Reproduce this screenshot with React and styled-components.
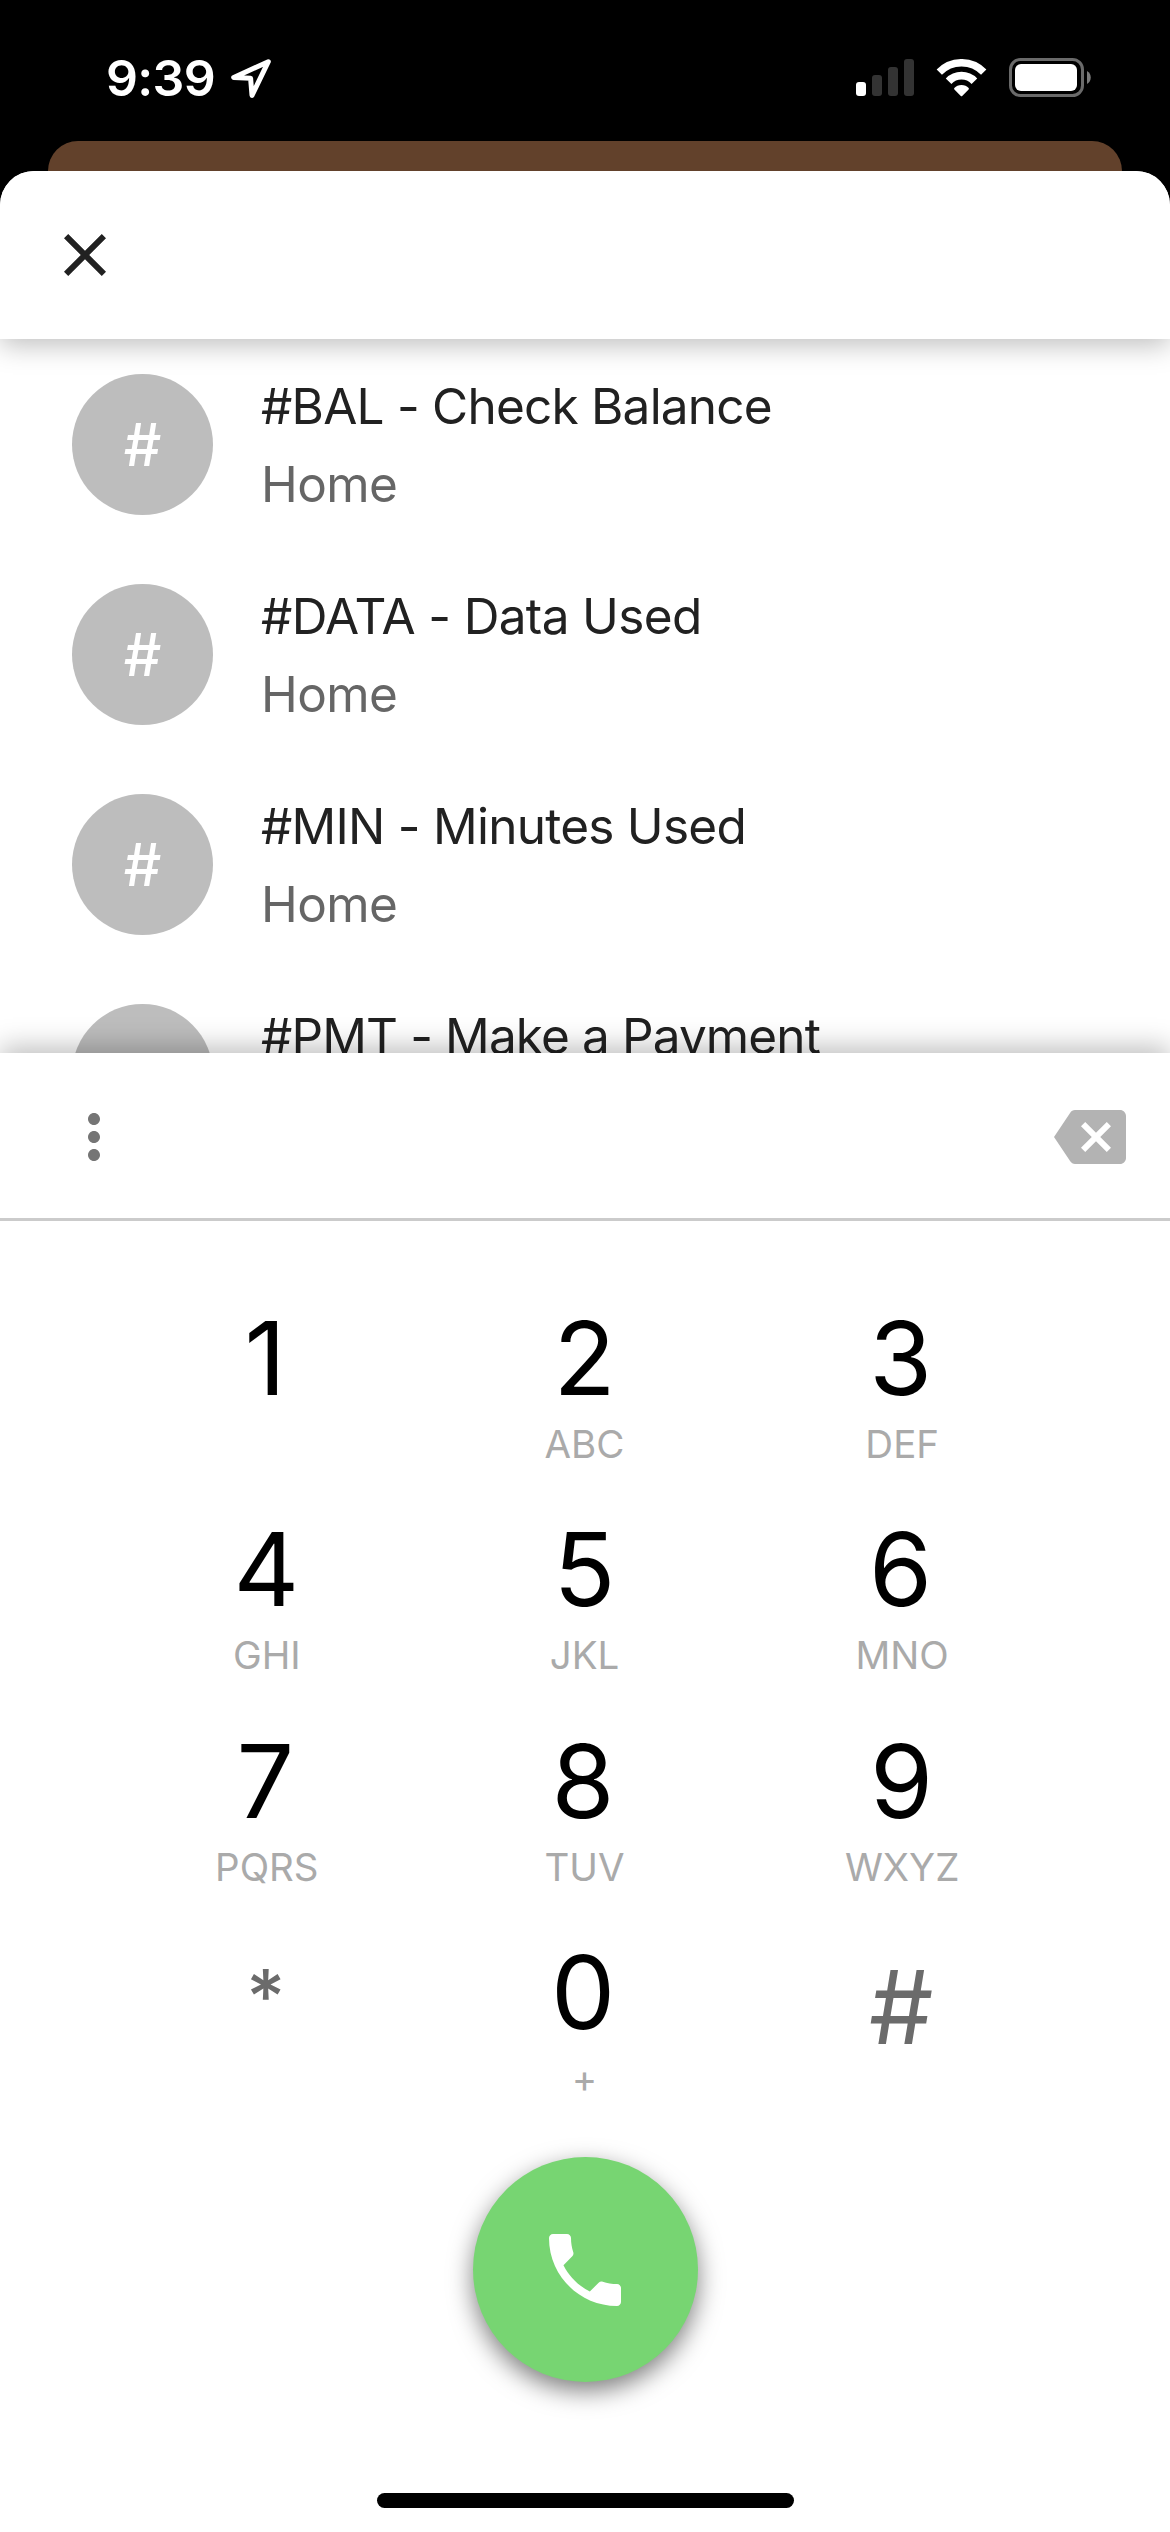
import React from "react";
import styled, { createGlobalStyle } from "styled-components";

const GlobalStyle = createGlobalStyle`
  *, *::before, *::after { box-sizing: border-box; }
  body { margin: 0; background: #000; }
  button { border: 0; padding: 0; margin: 0; background: none; font: inherit; color: inherit; }
  svg { display: block; flex: none; }
`;

const Screen = styled.div`
  width: 1170px;
  height: 2532px;
  overflow: hidden;
  display: flex;
  flex-direction: column;
  background: #000;
  font-family: Inter, "Liberation Sans", sans-serif;
  white-space: nowrap;
`;

const StatusBar = styled.header`
  flex: none;
  height: 141px;
  padding: 58px 79px 0 106px;
  display: flex;
  justify-content: space-between;
  align-items: flex-start;
  color: #fff;
`;

const StatusGroup = styled.div`
  display: flex;
  align-items: flex-start;
`;

const Clock = styled.time`
  width: 125px;
  height: 39px;
  font-size: 50px;
  line-height: 40px;
  font-weight: 600;
  letter-spacing: -0.7px;
`;

const LocationIcon = styled.svg`
  margin-top: 1px;
`;

const SignalBars = styled.div`
  display: flex;
  align-items: flex-end;
  gap: 6px;
  height: 38px;
  margin-right: 22px;
`;

const SignalBar = styled.span`
  width: 10px;
  height: ${(p) => p.$height}px;
  border-radius: 3px;
  background: ${(p) => (p.$active ? "#fff" : "#333")};
`;

const WifiIcon = styled.svg`
  margin: 1px 22px 0 0;
`;

const BackCard = styled.div`
  flex: none;
  height: 30px;
  margin: 0 48px;
  border-radius: 30px 30px 0 0;
  background: #62412b;
`;

const Sheet = styled.main`
  flex: 1;
  min-height: 0;
  display: flex;
  flex-direction: column;
  overflow: hidden;
  border-radius: 34px 34px 0 0;
  background: #fff;
`;

const SheetHeader = styled.div`
  position: relative;
  z-index: 1;
  flex: none;
  height: 168px;
  padding: 48px 49px;
  background: #fff;
  box-shadow: 0 6px 26px rgba(0, 0, 0, 0.26);
`;

const ContactList = styled.ul`
  flex: none;
  height: 714px;
  margin: 0;
  padding: 0;
  list-style: none;
  overflow: hidden;
`;

const ContactRow = styled.li`
  height: 210px;
  padding: 35px 72px 0;
  display: flex;
  gap: 48px;
`;

const Avatar = styled.div`
  flex: none;
  width: 141px;
  height: 141px;
  border-radius: 50%;
  display: flex;
  align-items: center;
  justify-content: center;
  background: #bdbdbd;
  color: #fff;
  font-size: 59px;
  font-weight: 500;
`;

const ContactText = styled.div`
  padding-top: 2px;
  display: flex;
  flex-direction: column;
  gap: 18px;
  font-size: 49.5px;
  line-height: 60px;
`;

const ContactName = styled.span`
  color: #212121;
  letter-spacing: ${(p) => p.$tracking}px;
`;

const ContactLabel = styled.span`
  color: #666;
  letter-spacing: -0.6px;
`;

const Dialer = styled.section`
  position: relative;
  z-index: 1;
  flex: 1;
  display: flex;
  flex-direction: column;
  align-items: center;
  background: #fff;
  box-shadow: 0 -6px 26px rgba(0, 0, 0, 0.26);
`;

const NumberBar = styled.div`
  flex: none;
  width: 100%;
  height: 168px;
  padding: 48px 44px 0 58px;
  display: flex;
  justify-content: space-between;
  border-bottom: 3px solid #cbcbcb;
`;

const Keypad = styled.div`
  flex: none;
  height: 936px;
  padding: 87px 1px 0 0;
  display: grid;
  grid-template-columns: repeat(3, 317.7px);
  grid-auto-rows: 211.3px;
`;

const Key = styled.button`
  display: flex;
  flex-direction: column;
  align-items: center;
  gap: 16px;
`;

const Digit = styled.span`
  height: 100px;
  margin-right: ${(p) => p.$trail ?? 3}px;
  font-size: 101.8px;
  line-height: 100px;
  color: #000;
`;

const Star = styled(Digit)`
  padding-top: 5px;
  font-size: 75px;
  font-weight: 500;
  color: #6b6b6b;
`;

const Pound = styled(Digit)`
  padding-top: 15px;
  color: #6b6b6b;
`;

const Letters = styled.span`
  font-size: 38.5px;
  line-height: 40px;
  color: #aaa;
`;

const CallButton = styled.button`
  flex: none;
  width: 225px;
  height: 225px;
  border-radius: 50%;
  display: flex;
  align-items: center;
  justify-content: center;
  background: #77d572;
  box-shadow: 0 9px 24px rgba(0, 0, 0, 0.5);
`;

const HomeIndicator = styled.div`
  width: 417px;
  height: 15px;
  margin: auto 0 24px;
  border-radius: 8px;
  background: #000;
`;

const contacts = [
  { name: "#BAL - Check Balance", tracking: -0.78 },
  { name: "#DATA - Data Used", tracking: -0.65 },
  { name: "#MIN - Minutes Used", tracking: -0.75 },
  { name: "#PMT - Make a Payment", tracking: -0.88 },
];

const keys = [
  { symbol: "1" },
  { symbol: "2", letters: "ABC", trail: 0 },
  { symbol: "3", letters: "DEF" },
  { symbol: "4", letters: "GHI", trail: 1 },
  { symbol: "5", letters: "JKL", trail: 0 },
  { symbol: "6", letters: "MNO" },
  { symbol: "7", letters: "PQRS" },
  { symbol: "8", letters: "TUV" },
  { symbol: "9", letters: "WXYZ", trail: 1 },
  { symbol: "*", as: Star, trail: 2 },
  { symbol: "0", letters: "+" },
  { symbol: "#", as: Pound, trail: 2 },
];

function Icon({ size, color, d }) {
  return (
    <svg width={size} height={size} viewBox="0 0 24 24" fill={color}>
      <path d={d} />
    </svg>
  );
}

export default function App() {
  return (
    <Screen>
      <GlobalStyle />
      <StatusBar>
        <StatusGroup>
          <Clock>9:39</Clock>
          <LocationIcon width="40" height="39" viewBox="0 0 40 39" fill="none" stroke="#fff" strokeWidth="5" strokeLinejoin="round">
            <path d="M37.3 2.7 2.7 18.5 19.6 19.3 21 36.4Z" />
          </LocationIcon>
        </StatusGroup>
        <StatusGroup>
          <SignalBars>
            <SignalBar $height={14} $active />
            <SignalBar $height={21} />
            <SignalBar $height={29} />
            <SignalBar $height={37} />
          </SignalBars>
          <WifiIcon width="51" height="38" viewBox="0 0 50 38" fill="none" stroke="#fff">
            <path d="M2.8 13.1A30.9 30.9 0 0 1 47.2 13.1" strokeWidth="7.4" />
            <path d="M12.1 22.2A17.9 17.9 0 0 1 37.9 22.2" strokeWidth="7.8" />
            <path d="M18.6 29.7Q21 26.9 25 26.9T31.4 29.7L25 36.2Z" fill="#fff" strokeWidth="2" strokeLinejoin="round" />
          </WifiIcon>
          <svg width="82" height="39" viewBox="0 0 82 39">
            <rect x="1.5" y="1.5" width="72" height="36" rx="10" fill="none" stroke="#6a6a6a" strokeWidth="3" />
            <rect x="6" y="6" width="62" height="27" rx="6" fill="#fff" />
            <path d="M78 13C83 15.5 83 23.5 78 26Z" fill="#7a7a7a" />
          </svg>
        </StatusGroup>
      </StatusBar>
      <BackCard />
      <Sheet>
        <SheetHeader>
          <Icon size={72} color="#212121" d="M19 6.41 17.59 5 12 10.59 6.41 5 5 6.41 10.59 12 5 17.59 6.41 19 12 13.41 17.59 19 19 17.59 13.41 12z" />
        </SheetHeader>
        <ContactList>
          {contacts.map((c) => (
            <ContactRow key={c.name}>
              <Avatar>#</Avatar>
              <ContactText>
                <ContactName $tracking={c.tracking}>{c.name}</ContactName>
                <ContactLabel>Home</ContactLabel>
              </ContactText>
            </ContactRow>
          ))}
        </ContactList>
        <Dialer>
          <NumberBar>
            <Icon size={72} color="#757575" d="M12 8c1.1 0 2-.9 2-2s-.9-2-2-2-2 .9-2 2 .9 2 2 2zm0 2c-1.1 0-2 .9-2 2s.9 2 2 2 2-.9 2-2-.9-2-2-2zm0 6c-1.1 0-2 .9-2 2s.9 2 2 2 2-.9 2-2-.9-2-2-2z" />
            <Icon size={72} color="#b3b3b3" d="M22 3H7c-.69 0-1.23.35-1.59.88L0 12l5.41 8.11c.36.53.9.89 1.59.89h15c1.1 0 2-.9 2-2V5c0-1.1-.9-2-2-2zm-3 12.59L17.59 17 14 13.41 10.41 17 9 15.59 12.59 12 9 8.41 10.41 7 14 10.59 17.59 7 19 8.41 15.41 12 19 15.59z" />
          </NumberBar>
          <Keypad>
            {keys.map(({ symbol, letters, trail, as: Glyph = Digit }) => (
              <Key key={symbol}>
                <Glyph $trail={trail}>{symbol}</Glyph>
                {letters && <Letters>{letters}</Letters>}
              </Key>
            ))}
          </Keypad>
          <CallButton>
            <Icon size={96} color="#fff" d="M6.62 10.79c1.44 2.83 3.76 5.14 6.59 6.59l2.2-2.2c.27-.27.67-.36 1.02-.24 1.12.37 2.33.57 3.57.57.55 0 1 .45 1 1V20c0 .55-.45 1-1 1-9.39 0-17-7.61-17-17 0-.55.45-1 1-1h3.5c.55 0 1 .45 1 1 0 1.25.2 2.45.57 3.57.11.35.03.74-.25 1.02l-2.2 2.2z" />
          </CallButton>
          <HomeIndicator />
        </Dialer>
      </Sheet>
    </Screen>
  );
}
